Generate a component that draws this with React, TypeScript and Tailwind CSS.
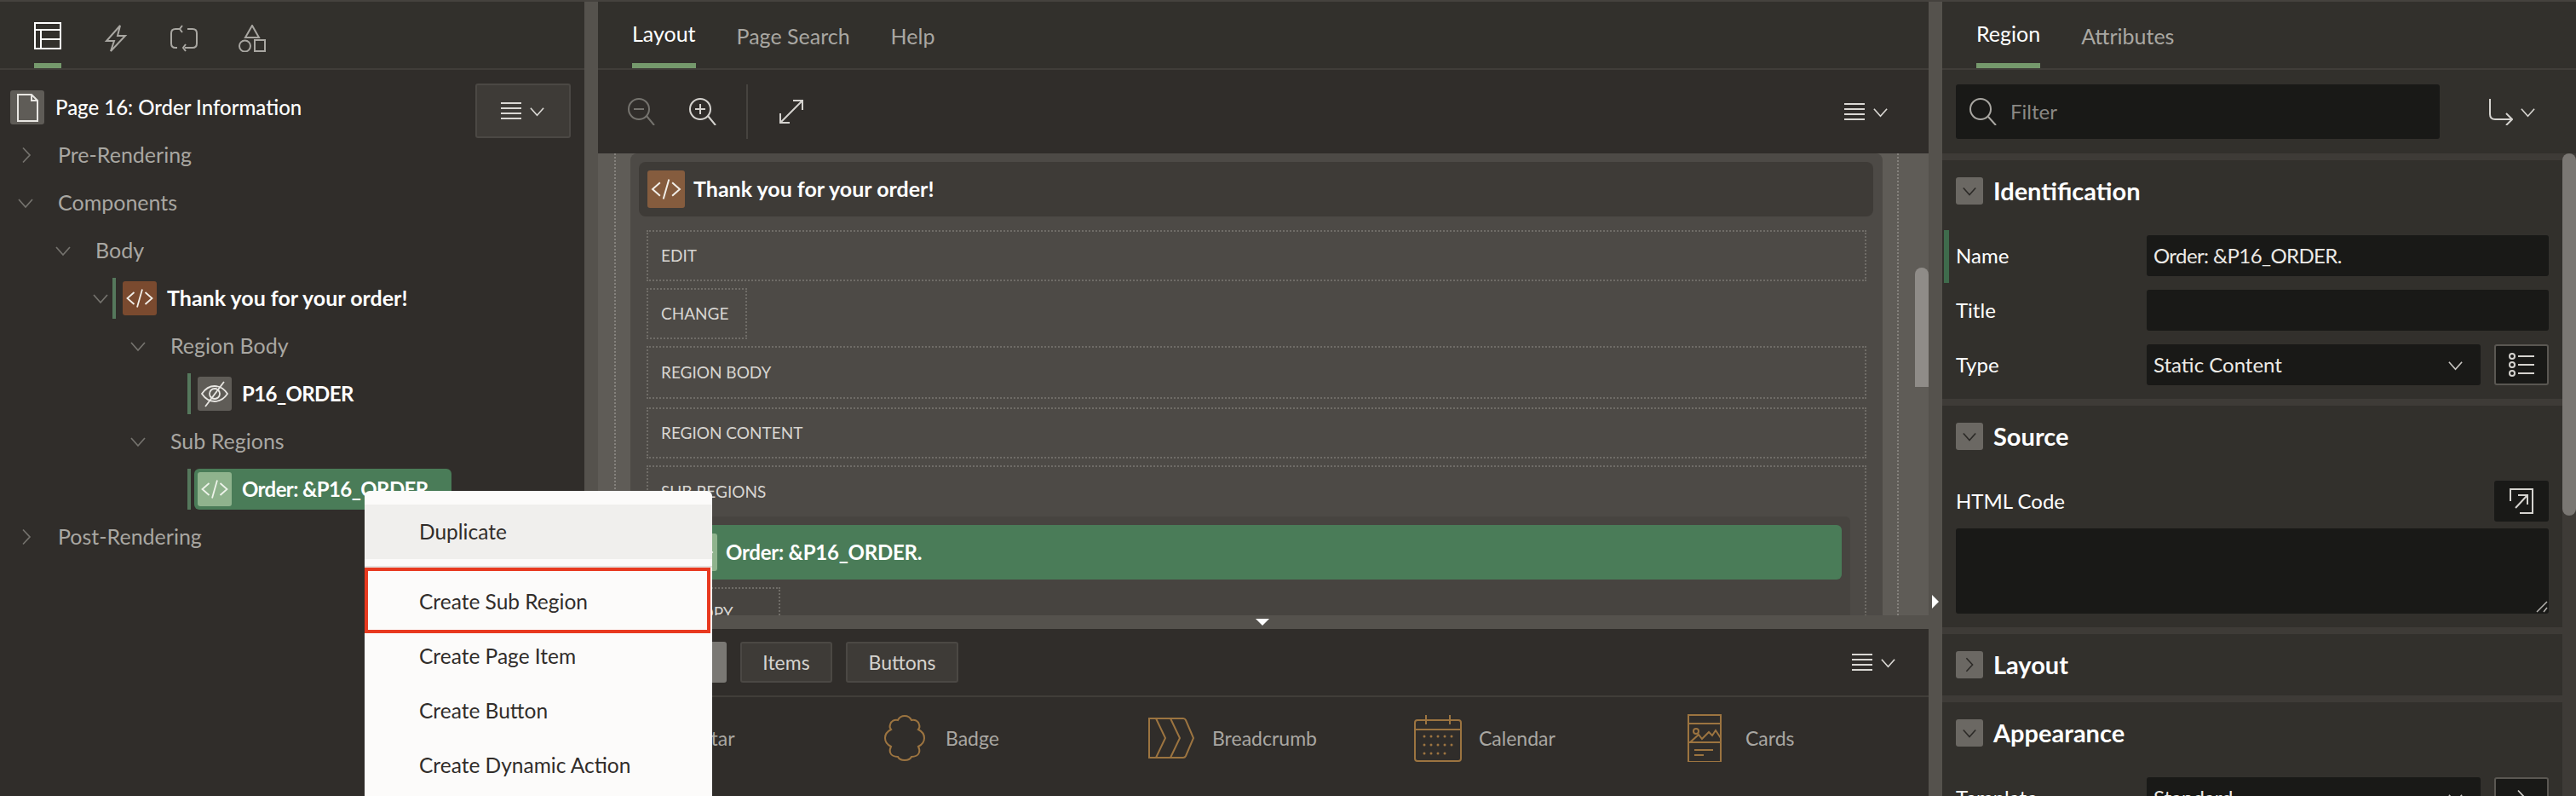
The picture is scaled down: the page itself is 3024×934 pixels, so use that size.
import type { ReactNode } from 'react';

const font = "font-['Lato','Noto_Sans',sans-serif]";

function Chevron({ dir = 'down', className = '' }: { dir?: 'down' | 'right'; className?: string }) {
  return (
    <svg viewBox="0 0 20 20" className={`fill-none stroke-current stroke-[1.7] ${className}`}>
      {dir === 'down' ? <path d="M2 6l8 9 8-9" /> : <path d="M6 1.5l8 8.5-8 8.5" />}
    </svg>
  );
}

function Lines({ className = '' }: { className?: string }) {
  return (
    <svg viewBox="0 0 24 20" className={`fill-none stroke-current stroke-2 ${className}`}>
      <path d="M0 1h24M0 7h24M0 13h24M0 19h24" />
    </svg>
  );
}

function MenuIcon({ className = '' }: { className?: string }) {
  return (
    <div className={`flex items-center gap-[9px] text-[#dad8d4] ${className}`}>
      <Lines className="w-6 h-5" />
      <Chevron className="w-[19px] h-[19px]" />
    </div>
  );
}

function CodeIcon({ className = '' }: { className?: string }) {
  return (
    <svg viewBox="0 0 40 40" className={`fill-none stroke-current stroke-[1.8] ${className}`}>
      <path d="M13.5 13L5.5 20l8 7M26.5 13l8 7-8 7M23 9.5l-6 21" />
    </svg>
  );
}

function EyeOffIcon() {
  return (
    <svg viewBox="0 0 40 40" className="w-10 h-10 fill-none stroke-[#e8e6e2] stroke-[1.8]">
      <path d="M5 20c4-6 9-9 15-9s11 3 15 9c-4 6-9 9-15 9S9 26 5 20z" />
      <circle cx="20" cy="20" r="6" />
      <path d="M31 6L9 35" />
    </svg>
  );
}

function TreeRow({ indent, label, open }: { indent: string; label: string; open?: boolean }) {
  return (
    <div className={`h-14 flex items-center shrink-0 ${indent}`}>
      <span className="w-12 flex shrink-0 text-[#75736e]">
        <Chevron dir={open ? 'down' : 'right'} className={open ? 'w-5 h-5' : 'w-5 h-5 ml-[1px]'} />
      </span>
      <span className="text-[25px] text-[#a9a7a2]">{label}</span>
    </div>
  );
}

function NodeRow({ pad, label, icon, iconBg, selected }: { pad: string; label: string; icon: ReactNode; iconBg: string; selected?: boolean }) {
  return (
    <div className={`h-14 flex items-center shrink-0 ${pad}`}>
      <span className="w-1 h-12 bg-[#55785c] mr-1 shrink-0" />
      <div className={`h-12 flex items-center pl-1 pr-3 rounded-md ${selected ? 'w-[302px] bg-[#4a7c58]' : ''}`}>
        <span className={`w-10 h-10 rounded-[3px] flex items-center justify-center shrink-0 ${iconBg}`}>{icon}</span>
        <span className="ml-3 text-[24px] font-bold tracking-tight text-white whitespace-nowrap">{label}</span>
      </div>
    </div>
  );
}

function LeftPanel() {
  return (
    <aside className="w-[686px] shrink-0 bg-[#302d2a] flex flex-col">
      <div className="h-20 shrink-0 border-b-2 border-[#403d39] bg-[#32302c] flex pl-10 gap-12">
        <div className="w-8 h-[78px] pt-2 border-b-[6px] border-[#75996c] flex items-center">
          <svg viewBox="0 0 32 32" className="w-8 h-8 fill-none stroke-white stroke-2">
            <path d="M1 1h30v30H1zM1 9h30M8 9v22M8 20h23" />
          </svg>
        </div>
        <div className="w-8 h-[78px] pt-2 flex items-center">
          <svg viewBox="0 0 32 32" className="w-8 h-8 fill-none stroke-[#a9a7a2] stroke-2">
            <path d="M21 1L5 19h9l-4 12 17-18h-9z" />
          </svg>
        </div>
        <div className="w-8 h-[78px] pt-2 flex items-center">
          <svg viewBox="0 0 32 32" className="w-8 h-8 fill-none stroke-[#a9a7a2] stroke-2">
            <path d="M12 5H6Q1 5 1 10v12q0 5 5 5h2M20 5h6q5 0 5 5v12q0 5-5 5h-9M14 1l-3 4 3 4M18 23l-3 4 3 4" />
          </svg>
        </div>
        <div className="w-8 h-[78px] pt-2 flex items-center">
          <svg viewBox="0 0 32 32" className="w-8 h-8 fill-none stroke-[#a9a7a2] stroke-2">
            <path d="M16 1l8 14H8z" />
            <circle cx="7.5" cy="25" r="6.5" />
            <path d="M19 18h12v13H19z" />
          </svg>
        </div>
      </div>

      <div className="h-14 mt-4 flex items-center pl-3 pr-4 shrink-0 relative">
        <span className="w-10 h-10 rounded-[3px] bg-[#5f5c57] flex items-center justify-center">
          <svg viewBox="0 0 40 40" className="w-10 h-10 fill-none stroke-[#e8e6e2] stroke-2">
            <path d="M9 5h16l7 7v24H9zM25 5v7h7" />
          </svg>
        </span>
        <span className="ml-[13px] text-[24px] font-medium text-white">Page 16: Order Information</span>
        <button className="ml-auto w-[112px] h-16 mt-2 rounded-[3px] border-2 border-[#4b4844] bg-[#3e3b37] flex items-center justify-center">
          <MenuIcon />
        </button>
      </div>

      <TreeRow indent="pl-[20px]" label="Pre-Rendering" />
      <TreeRow indent="pl-[20px]" label="Components" open />
      <TreeRow indent="pl-[64px]" label="Body" open />
      <div className="h-14 flex items-center pl-[108px] shrink-0">
        <span className="w-6 flex shrink-0 text-[#75736e]">
          <Chevron className="w-5 h-5" />
        </span>
        <span className="w-1 h-12 bg-[#55785c] mr-2 shrink-0" />
        <span className="w-10 h-10 rounded-[3px] bg-[#7a4a2f] flex items-center justify-center shrink-0">
          <CodeIcon className="w-10 h-10 text-[#f2efe9]" />
        </span>
        <span className="ml-3 text-[25px] font-bold text-white whitespace-nowrap">Thank you for your order!</span>
      </div>
      <TreeRow indent="pl-[152px]" label="Region Body" open />
      <NodeRow pad="pl-[220px]" label="P16_ORDER" icon={<EyeOffIcon />} iconBg="bg-[#5f5c57]" />
      <TreeRow indent="pl-[152px]" label="Sub Regions" open />
      <NodeRow
        pad="pl-[220px]"
        label="Order: &P16_ORDER."
        icon={<CodeIcon className="w-10 h-10 text-[#eef3ea]" />}
        iconBg="bg-[#8fb38d]"
        selected
      />
      <TreeRow indent="pl-[20px]" label="Post-Rendering" />
    </aside>
  );
}

function Splitter({ children, className = '' }: { children?: ReactNode; className?: string }) {
  return <div className={`bg-[#55524d] shrink-0 relative ${className}`}>{children}</div>;
}

function DottedBox({ label, className = '' }: { label: string; className?: string }) {
  return (
    <div className={`h-[60px] border-2 border-dotted border-[#6f6c67] flex items-center pl-[15px] text-[19px] text-[#d8d6d2] shrink-0 ${className}`}>
      {label}
    </div>
  );
}

function Canvas() {
  return (
    <div className="h-[542px] shrink-0 overflow-hidden bg-[#5f5c57] pl-[19px] pr-[35px] relative">
      <div className="h-full border-x-2 border-dotted border-[#85827d] px-[17px]">
        <div className="h-full rounded-t-lg bg-[#4d4a46] pt-[10px] pl-[10px] pr-[11px]">
          <div className="h-16 rounded-lg bg-[#3e3b37] flex items-center pl-[10px]">
            <span className="w-11 h-11 rounded-[3px] bg-[#855c3e] flex items-center justify-center">
              <CodeIcon className="w-11 h-11 text-[#f2efe9]" />
            </span>
            <span className="ml-[10px] text-[25px] font-bold text-white">Thank you for your order!</span>
          </div>
          <div className="mt-4 pl-[9px] pr-2 flex flex-col">
            <DottedBox label="EDIT" />
            <DottedBox label="CHANGE" className="w-[118px] mt-2" />
            <DottedBox label="REGION BODY" className="!h-[62px] mt-2" />
            <DottedBox label="REGION CONTENT" className="mt-[10px]" />
            <div className="mt-2 border-2 border-dotted border-[#6f6c67] h-[300px] shrink-0">
              <div className="h-[58px] flex items-center pl-[15px] text-[19px] text-[#d8d6d2]">SUB REGIONS</div>
              <div className="ml-[17px] mr-[17px] rounded-t-md bg-[#474440] pt-[10px] pl-[10px] pr-[10px] h-[200px]">
                <div className="h-16 rounded-md bg-[#4a7c58] flex items-center pl-[10px]">
                  <span className="w-11 h-11 rounded-[3px] bg-[#8fb38d] flex items-center justify-center">
                    <CodeIcon className="w-11 h-11 text-[#eef3ea]" />
                  </span>
                  <span className="ml-[10px] text-[24px] font-bold tracking-[-0.01em] text-white">Order: &amp;P16_ORDER.</span>
                </div>
                <DottedBox label="COPY" className="w-[128px] mt-[9px] !pl-[20px]" />
              </div>
            </div>
          </div>
        </div>
      </div>
      <div className="absolute right-0 top-[134px] w-4 h-[140px] rounded-t-lg bg-[#8f8c88]" />
    </div>
  );
}

function ZoomIcon({ plus, className = '' }: { plus?: boolean; className?: string }) {
  return (
    <svg viewBox="0 0 32 32" className={`w-8 h-8 fill-none stroke-current stroke-2 ${className}`}>
      <circle cx="13" cy="13" r="12" />
      <path d="M22 21l9 11M7 13h12" />
      {plus && <path d="M13 7v12" />}
    </svg>
  );
}

const gallery = [
  {
    label: 'Avatar',
    icon: <circle cx="28" cy="28" r="24" />,
  },
  {
    label: 'Badge',
    icon: (
      <path d="M28 2c5 0 7 3 8 5 4-1 8 1 9 5 1 3 0 5-1 6 4 2 7 5 7 10s-3 8-7 10c1 2 2 4 1 7-1 3-5 5-9 5-1 2-3 4-8 4s-7-2-8-4c-4 0-8-2-9-5-1-3 0-5 1-7-4-2-7-5-7-10s3-8 7-10c-1-1-2-3-1-6 1-4 5-6 9-5 1-2 3-5 8-5z" />
    ),
  },
  {
    label: 'Breadcrumb',
    icon: <path d="M2 5h40q2 0 3 2l9 21-9 21q-1 2-3 2H2zM10 5l11 23-11 23M27 5l11 23-11 23" />,
  },
  {
    label: 'Calendar',
    icon: (
      <>
        <path d="M4 7h48q3 0 3 3v42q0 3-3 3H4q-3 0-3-3V10q0-3 3-3zM1 18h54M14 1v11M42 1v11" />
        {[26, 36, 46].map((y) =>
          [12, 20, 28, 36, 44].map((x) =>
            y === 46 && x === 44 ? null : <circle key={`${x}-${y}`} cx={x} cy={y} r="1.5" className="fill-current stroke-0" />,
          ),
        )}
      </>
    ),
  },
  {
    label: 'Cards',
    icon: (
      <>
        <path d="M9 1h38v55H9zM9 11h38M9 33h38M16 42h22M16 48h11M11 33l10-9 4 5 8-8 4 4 4-6 6 9" />
        <circle cx="18" cy="20" r="3" />
      </>
    ),
  },
];

function Gallery() {
  return (
    <div className="flex-1 pl-[19px] flex items-start pt-5">
      {gallery.map((g) => (
        <div key={g.label} className="w-[313px] shrink-0 flex items-center gap-5">
          <svg viewBox="0 0 56 56" className="w-14 h-14 fill-none stroke-[#9c7440] stroke-2 text-[#9c7440] shrink-0">
            {g.icon}
          </svg>
          <span className="text-[23px] text-[#a9a7a2]">{g.label}</span>
        </div>
      ))}
    </div>
  );
}

function CenterPanel() {
  return (
    <main className="w-[1562px] shrink-0 flex flex-col bg-[#302d2a]">
      <div className="h-20 shrink-0 border-b-2 border-[#403d39] bg-[#32302c] flex pl-10 gap-12 text-[25px]">
        <div className="h-[78px] pt-1 border-b-[6px] border-[#75996c] flex items-center text-white">Layout</div>
        <div className="h-[78px] pt-1 flex items-center text-[#a9a7a2]">Page Search</div>
        <div className="h-[78px] pt-1 flex items-center text-[#a9a7a2]">Help</div>
      </div>
      <div className="h-[98px] shrink-0 flex items-center pl-[35px] pr-[47px]">
        <ZoomIcon className="text-[#75736e]" />
        <ZoomIcon plus className="ml-10 text-[#d5d3cf]" />
        <span className="w-0.5 h-16 bg-[#46433f] ml-[35px]" />
        <svg viewBox="0 0 28 28" className="w-7 h-7 ml-[37px] fill-none stroke-[#d5d3cf] stroke-2">
          <path d="M1 27L27 1M16 1h11v11M1 16v11h11" />
        </svg>
        <MenuIcon className="ml-auto" />
      </div>
      <Canvas />
      <Splitter className="h-4">
        <span className="absolute left-[772px] top-1 w-0 h-0 border-x-[8px] border-t-[8px] border-x-transparent border-t-white" />
      </Splitter>
      <div className="h-20 shrink-0 border-b-2 border-[#403d39] flex items-center pl-[38px] pr-[38px] gap-4 text-[23px] text-[#d5d3cf]">
        <button className="w-[113px] h-12 rounded-[3px] bg-[#7a7874] text-white">Regions</button>
        <button className="w-[108px] h-12 rounded-[3px] border-2 border-[#4b4844] bg-[#3e3b37]">Items</button>
        <button className="w-[132px] h-12 rounded-[3px] border-2 border-[#4b4844] bg-[#3e3b37]">Buttons</button>
        <MenuIcon className="ml-auto" />
      </div>
      <Gallery />
    </main>
  );
}

function SectionHead({ label, open = true }: { label: string; open?: boolean }) {
  return (
    <div className="flex items-center h-8 gap-3">
      <span className="w-8 h-8 rounded-[3px] bg-[#6b6863] flex items-center justify-center text-[#2b2926]">
        <Chevron dir={open ? 'down' : 'right'} className="w-[18px] h-[18px]" />
      </span>
      <span className="text-[29px] font-bold text-white">{label}</span>
    </div>
  );
}

function Input({ value, chevron, className = '' }: { value?: string; chevron?: boolean; className?: string }) {
  return (
    <div className={`h-12 rounded-[3px] bg-[#191917] flex items-center justify-between pl-2 pr-5 text-[24px] text-[#eceae6] ${className}`}>
      <span>{value}</span>
      {chevron && <Chevron className="w-[19px] h-[19px] text-[#c9c7c3]" />}
    </div>
  );
}

function Field({ label, children, marked }: { label: string; children: ReactNode; marked?: boolean }) {
  return (
    <div className="flex items-center relative h-12">
      {marked && <span className="absolute -left-[14px] -top-[6px] w-[6px] h-[62px] bg-[#3f6b4c]" />}
      <span className="w-[224px] shrink-0 text-[24px] text-white">{label}</span>
      {children}
    </div>
  );
}

function RightPanel() {
  return (
    <aside className="flex-1 bg-[#32302c] flex flex-col min-w-0">
      <div className="h-20 shrink-0 border-b-2 border-[#403d39] flex pl-10 gap-12 text-[25px]">
        <div className="h-[78px] pt-1 border-b-[6px] border-[#75996c] flex items-center text-white">Region</div>
        <div className="h-[78px] pt-1 flex items-center text-[#a9a7a2]">Attributes</div>
      </div>
      <div className="h-[98px] shrink-0 flex items-center pl-4">
        <div className="w-[568px] h-16 rounded-[3px] bg-[#191917] flex items-center pl-4">
          <svg viewBox="0 0 32 32" className="w-8 h-8 fill-none stroke-[#a9a7a2] stroke-2">
            <circle cx="13" cy="13" r="12" />
            <path d="M22 22l9 10" />
          </svg>
          <span className="ml-4 text-[24px] text-[#8a8884]">Filter</span>
        </div>
        <div className="ml-[58px] flex items-center gap-2 text-[#d5d3cf]">
          <svg viewBox="0 0 28 32" className="w-7 h-8 fill-none stroke-current stroke-2">
            <path d="M1 1v18q0 6 6 6h20M20 18l7 7-7 7" />
          </svg>
          <Chevron className="w-[19px] h-[19px]" />
        </div>
      </div>
      <div className="flex-1 flex min-h-0 overflow-hidden">
        <div className="flex-1 min-w-0 bg-[#32302c]">
          <section className="border-t-8 border-[#3e3b37] px-4 pt-5 pb-4">
            <SectionHead label="Identification" />
            <div className="mt-9 flex flex-col gap-4">
              <Field label="Name" marked>
                <Input value="Order: &P16_ORDER." className="flex-1 tracking-tight" />
              </Field>
              <Field label="Title">
                <Input className="flex-1" />
              </Field>
              <Field label="Type">
                <Input value="Static Content" chevron className="w-[392px]" />
                <button className="ml-4 w-16 h-12 rounded-[3px] border-2 border-[#5a5752] bg-[#191917] flex items-center justify-center">
                  <svg viewBox="0 0 32 32" className="w-8 h-8 fill-none stroke-[#d5d3cf] stroke-2">
                    <circle cx="5" cy="6" r="3" />
                    <circle cx="5" cy="16" r="3" />
                    <circle cx="5" cy="26" r="3" />
                    <path d="M12 6h19M12 16h19M12 26h19" />
                  </svg>
                </button>
              </Field>
            </div>
          </section>
          <section className="border-t-8 border-[#3e3b37] px-4 pt-5 pb-4">
            <SectionHead label="Source" />
            <div className="mt-9 flex items-center justify-between h-12">
              <span className="text-[24px] text-white">HTML Code</span>
              <button className="w-16 h-12 rounded-[3px] bg-[#191917] flex items-center justify-center">
                <svg viewBox="0 0 32 32" className="w-8 h-8 fill-none stroke-[#d5d3cf] stroke-2">
                  <path d="M3 16V2h26v28H14M9 24L23 9M12 9h11v11" />
                </svg>
              </button>
            </div>
            <div className="mt-2 h-[100px] rounded-[3px] bg-[#191917] flex items-end justify-end p-px">
              <svg viewBox="0 0 14 14" className="w-[14px] h-[14px] fill-none stroke-[#b5b3af] stroke-[1.5]">
                <path d="M1 13L13 1M9 13l4-5" />
              </svg>
            </div>
          </section>
          <section className="border-t-8 border-[#3e3b37] px-4 pt-5 pb-5">
            <SectionHead label="Layout" open={false} />
          </section>
          <section className="border-t-8 border-[#3e3b37] px-4 pt-5 pb-4">
            <SectionHead label="Appearance" />
            <div className="mt-9">
              <Field label="Template">
                <Input value="Standard" chevron className="w-[392px]" />
                <button className="ml-4 w-16 h-12 rounded-[3px] border-2 border-[#5a5752] bg-[#191917] flex items-center justify-center text-[#d5d3cf]">
                  <Chevron dir="right" className="w-5 h-5" />
                </button>
              </Field>
            </div>
          </section>
        </div>
        <div className="w-4 shrink-0 bg-[#3e3b37]">
          <div className="h-[425px] rounded-b-lg rounded-t-lg bg-[#7a7773]" />
        </div>
      </div>
    </aside>
  );
}

function ContextMenu() {
  const items = ['Create Page Item', 'Create Button', 'Create Dynamic Action'];
  return (
    <div className="absolute left-[428px] top-[574px] w-[408px] h-[358px] rounded-t-md bg-[#fcfbfa] pt-4 text-[24.5px] text-[#312d2a]">
      <div className="h-16 bg-[#f0efed] flex items-center pl-16">Duplicate</div>
      <div className="mt-2 h-0.5 bg-[#e5e3e0]" />
      <div className="h-[72px] pt-2 flex items-center pl-16">Create Sub Region</div>
      {items.map((item) => (
        <div key={item} className="h-16 flex items-center pl-16">
          {item}
        </div>
      ))}
      <div className="absolute left-0 top-[90px] w-[406px] h-[77px] border-4 border-[#e8391f]" />
    </div>
  );
}

export default function App() {
  return (
    <div className={`relative w-[3024px] h-[934px] overflow-hidden border-t-2 border-[#45423e] bg-[#302d2a] flex ${font}`}>
      <LeftPanel />
      <Splitter className="w-4" />
      <CenterPanel />
      <Splitter className="w-4">
        <span className="absolute left-1 top-[696px] w-0 h-0 border-y-[8px] border-l-[8px] border-y-transparent border-l-white" />
      </Splitter>
      <RightPanel />
      <ContextMenu />
    </div>
  );
}
